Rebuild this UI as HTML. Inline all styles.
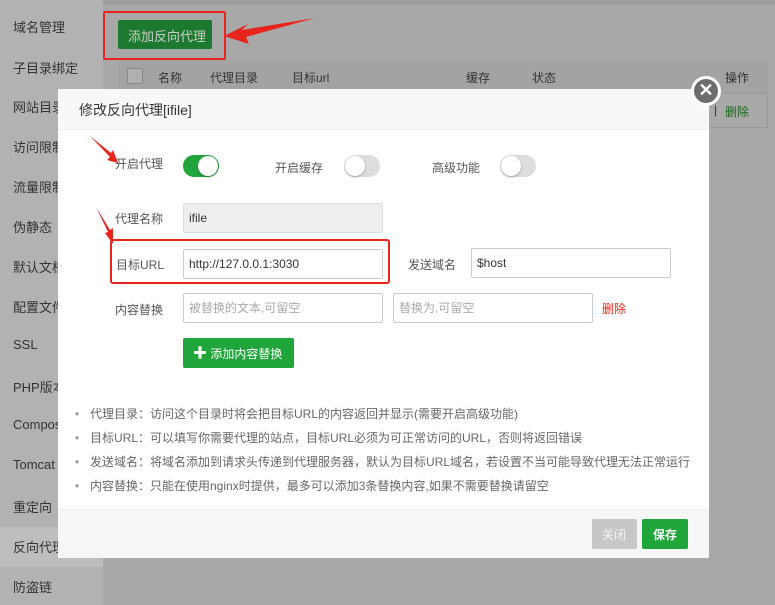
<!DOCTYPE html>
<html><head><meta charset="utf-8"><style>
*{box-sizing:border-box;margin:0;padding:0}
body{width:775px;height:605px;overflow:hidden;position:relative;background:#a8a8a8;font-family:"Liberation Sans","Noto Sans CJK SC",sans-serif;font-size:12px;color:#333}
.side{position:absolute;left:0;top:0;width:103px;height:605px;background:#b2b2b2}
.side div{position:absolute;left:13px;font-size:13px;color:#333}
.act{position:absolute;left:0;top:527px;width:103px;height:40px;background:#bdbdbd}
.abs{position:absolute}
.modal{position:absolute;left:58px;top:89px;width:651px;height:469px;background:#fff}
.hd{position:absolute;left:0;top:0;width:651px;height:41px;background:#f8f8f8;border-bottom:1px solid #eee;font-size:14px;color:#333;padding:11px 0 0 21px}
.lbl{position:absolute;font-size:12px;color:#555}
.inp{position:absolute;height:30px;border:1px solid #ccc;border-radius:2px;padding:0 5px;line-height:28px;font-size:12px;color:#333}
.sw{position:absolute;width:36px;height:22px;border-radius:11px;background:#ddd}
.sw i{position:absolute;top:1px;width:20px;height:20px;border-radius:50%;background:#fff;box-shadow:0 1px 2px rgba(0,0,0,.3)}
.tips{position:absolute;left:17px;top:318px;font-size:12px;color:#666}
.tips div{height:24px;line-height:14px}
.tips span{display:inline-block;width:15px;color:#999}
</style></head><body>
<div class="side">
<div style="top:17px">域名管理</div>
<div style="top:58px">子目录绑定</div>
<div style="top:97px">网站目录</div>
<div style="top:137px">访问限制</div>
<div style="top:177px">流量限制</div>
<div style="top:217px">伪静态</div>
<div style="top:257px">默认文档</div>
<div style="top:297px">配置文件</div>
<div style="top:337px">SSL</div>
<div style="top:377px">PHP版本</div>
<div style="top:417px">Composer</div>
<div style="top:457px">Tomcat</div>
<div style="top:497px">重定向</div>
</div>
<div class="act"></div>
<div class="abs" style="left:13px;top:537px;font-size:13px">反向代理</div>
<div class="abs" style="left:13px;top:577px;font-size:13px">防盗链</div>
<div class="abs" style="left:103px;top:0;width:672px;height:5px;background:#9e9e9e"></div>
<div class="abs" style="left:118px;top:60px;width:650px;height:68px;border:1px solid #999;background:#a9a9a9"></div>
<div class="abs" style="left:118px;top:60px;width:650px;height:34px;background:#a3a3a3;border-bottom:1px solid #999"></div>
<div class="abs" style="left:127px;top:68px;width:16px;height:16px;border:1px solid #888;background:#b0b0b0;border-radius:2px"></div>
<div class="abs" style="left:158px;top:69px;font-size:12px">名称</div>
<div class="abs" style="left:210px;top:69px;font-size:12px">代理目录</div>
<div class="abs" style="left:292px;top:69px;font-size:12px">目标url</div>
<div class="abs" style="left:466px;top:69px;font-size:12px">缓存</div>
<div class="abs" style="left:532px;top:69px;font-size:12px">状态</div>
<div class="abs" style="left:725px;top:69px;font-size:12px">操作</div>
<div class="abs" style="left:714px;top:103px;font-size:12px;color:#333">|</div>
<div class="abs" style="left:725px;top:103px;font-size:12px;color:#1a6b1a">删除</div>
<div class="abs" style="left:103px;top:11px;width:123px;height:49px;border:2px solid #e8251c;border-radius:2px"></div>
<div class="abs" style="left:118px;top:20px;width:94px;height:29px;background:#1b7a2d;border-radius:2px;color:#ccc;font-size:13px;padding:6px 0 0 10px">添加反向代理</div>
<svg class="abs" style="left:222px;top:16px" width="100" height="30"><polygon points="93,2 20,14 26,8 2,20 27,28 24,21" fill="#e8251c"/></svg>
<div class="modal">
<div class="hd">修改反向代理[ifile]</div>
<div class="lbl" style="left:57px;top:66px">开启代理</div>
<div class="sw" style="left:125px;top:66px;background:#20a53a"><i style="left:15px"></i></div>
<div class="lbl" style="left:217px;top:70px">开启缓存</div>
<div class="sw" style="left:286px;top:66px"><i style="left:1px"></i></div>
<div class="lbl" style="left:374px;top:70px">高级功能</div>
<div class="sw" style="left:442px;top:66px"><i style="left:1px"></i></div>
<div class="lbl" style="left:57px;top:121px">代理名称</div>
<div class="inp" style="left:125px;top:114px;width:200px;background:#eee;border-color:#ddd">ifile</div>
<div class="lbl" style="left:58px;top:167px">目标URL</div>
<div class="inp" style="left:125px;top:160px;width:200px">http://127.0.0.1:3030</div>
<div class="abs" style="left:52px;top:150px;width:280px;height:45px;border:2px solid #e8251c;border-radius:3px"></div>
<div class="lbl" style="left:350px;top:167px">发送域名</div>
<div class="inp" style="left:413px;top:159px;width:200px">$host</div>
<div class="lbl" style="left:57px;top:212px">内容替换</div>
<div class="inp" style="left:125px;top:204px;width:200px;color:#aaa">被替换的文本,可留空</div>
<div class="inp" style="left:335px;top:204px;width:200px;color:#aaa">替换为,可留空</div>
<div class="lbl" style="left:544px;top:211px;color:#e8251c">删除</div>
<div class="abs" style="left:125px;top:249px;width:111px;height:30px;background:#20a53a;border-radius:2px;color:#fff;font-size:12px;padding:7px 0 0 10px"><b style="font-size:14px;line-height:12px">✚</b> 添加内容替换</div>
<svg class="abs" style="left:31px;top:46px" width="32" height="32"><polygon points="1,1 22,18 24,15 29,28 18,25 21,22" fill="#e8251c"/></svg>
<svg class="abs" style="left:37px;top:117px" width="22" height="40"><polygon points="1,1 15,24 18,22 18,38 10,27 13,26" fill="#e8251c"/></svg>
<div class="tips">
<div><span>•</span>代理目录：访问这个目录时将会把目标URL的内容返回并显示(需要开启高级功能)</div>
<div><span>•</span>目标URL：可以填写你需要代理的站点，目标URL必须为可正常访问的URL，否则将返回错误</div>
<div><span>•</span>发送域名：将域名添加到请求头传递到代理服务器，默认为目标URL域名，若设置不当可能导致代理无法正常运行</div>
<div><span>•</span>内容替换：只能在使用nginx时提供，最多可以添加3条替换内容,如果不需要替换请留空</div>
</div>
<div class="abs" style="left:0;top:420px;width:651px;height:49px;background:#f5f6f5;border-top:1px solid #eee"></div>
<div class="abs" style="left:534px;top:430px;width:45px;height:30px;background:#c7c7c7;border-radius:2px;color:#f5f5f5;font-size:12px;padding:7px 0 0 10px">关闭</div>
<div class="abs" style="left:584px;top:430px;width:46px;height:30px;background:#20a53a;border-radius:2px;color:#fff;font-size:12px;font-weight:bold;padding:7px 0 0 11px">保存</div>
</div>
<div class="abs" style="left:691px;top:76px;width:30px;height:30px;border-radius:50%;background:#6d6d6d;border:3px solid #fff;color:#fff;font-size:18px;font-weight:bold;text-align:center;line-height:23px">✕</div>
</body></html>
